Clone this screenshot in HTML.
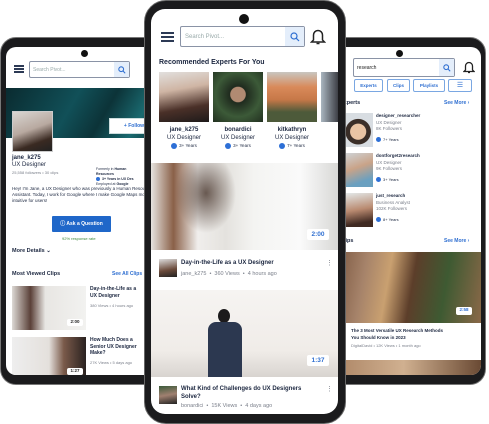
<!DOCTYPE html>
<html><head><meta charset="utf-8"><style>
*{margin:0;padding:0;box-sizing:border-box}
body{width:489px;height:424px;background:#fff;position:relative;overflow:hidden;font-family:"Liberation Sans",sans-serif;color:#1c2740}
.a{position:absolute}
.frame{position:absolute;background:#1b1b1d;border-radius:18px;border:1px solid #777}
.scr{position:absolute;background:#fff;overflow:hidden;border-radius:12px}
.b{font-weight:bold}
.g{color:#7a7f8a}
.blue{color:#2f6fd1}
.chk{display:inline-block;width:6px;height:6px;border-radius:50%;background:#2d6fd6;vertical-align:middle;margin-right:2px}
.ham{position:absolute;height:2px;background:#2c3a55}
.dur{position:absolute;background:#fff;color:#2f6fd1;font-weight:bold;border-radius:2px;text-align:center}
.sb{position:absolute;background:#e4eefb;display:flex;align-items:center;justify-content:center}
</style></head><body>

<!-- LEFT PHONE -->
<div class="frame" style="left:0;top:37px;width:170px;height:348px;border-radius:16px"></div>
<div class="scr" style="left:6px;top:47px;width:160px;height:328px;border-radius:10px 0 0 10px">
  <div class="a" style="left:75px;top:3px;width:7px;height:7px;border-radius:50%;background:#111"></div>
  <div class="ham" style="left:8px;top:18px;width:10px"></div>
  <div class="ham" style="left:8px;top:21px;width:10px"></div>
  <div class="ham" style="left:8px;top:24px;width:10px"></div>
  <div class="a" style="left:23px;top:14px;width:101px;height:17px;border:1px solid #8a93a6;border-radius:2px;font-size:5px;color:#9aa;padding:5px 3px">Search Pivot...</div>
  <div class="sb" style="left:108px;top:15px;width:15px;height:15px"><svg width="8" height="8" viewBox="0 0 10 10"><circle cx="4" cy="4" r="3" fill="none" stroke="#2f6fd1" stroke-width="1.3"/><path d="M6.3 6.3L9 9" stroke="#2f6fd1" stroke-width="1.3"/></svg></div>
  <!-- banner -->
  <div class="a" style="left:0;top:41px;width:160px;height:50px;background:linear-gradient(120deg,#0a2b30 0%,#115058 40%,#0c3338 60%,#1a6a70 80%,#0b2c30 100%)"></div>
  <div class="a" style="left:6px;top:64px;width:41px;height:41px;background:linear-gradient(160deg,#d9d6d2,#b8a9a0 45%,#3a2a22 75%,#222 100%);border:1px solid #ccc"></div>
  <div class="a" style="left:103px;top:71px;width:50px;height:16px;background:#fff;border:1px solid #cdd;color:#2f6fd1;font-size:5px;font-weight:bold;line-height:15px;text-align:center">+ Follow</div>
  <div class="a b" style="left:6px;top:108px;font-size:6px">jane_k275</div>
  <div class="a" style="left:6px;top:115px;font-size:6px">UX Designer</div>
  <div class="a g" style="left:6px;top:123px;font-size:4px">25,558 followers • 30 clips</div>
  <div class="a" style="left:90px;top:120px;font-size:3.5px;line-height:5px">Formerly in <b>Human<br>Resources</b><br><span class="chk" style="width:4px;height:4px"></span><b>3+ Years in UX Des</b><br>Employed at <b>Google</b></div>
  <div class="a" style="left:6px;top:139px;width:150px;font-size:4.5px;line-height:6px">Hey! I'm Jane, a UX Designer who was previously a Human Resources Assistant. Today, I work for Google where I make Google Maps more intuitive for users!</div>
  <div class="a" style="left:46px;top:169px;width:59px;height:16px;background:#1f67c9;color:#fff;font-size:5px;font-weight:bold;line-height:16px;text-align:center;border-radius:1px">ⓘ Ask a Question</div>
  <div class="a" style="left:56px;top:189px;font-size:4px;color:#3d8a3d">92% response rate</div>
  <div class="a b" style="left:6px;top:201px;font-size:5.5px">More Details ⌄</div>
  <div class="a b" style="left:6px;top:224px;font-size:5.5px">Most Viewed Clips</div>
  <div class="a b blue" style="left:106px;top:224px;font-size:5px">See All Clips</div>
  <div class="a" style="left:6px;top:239px;width:74px;height:44px;background:linear-gradient(90deg,#ddd9d4 0%,#5a4038 25%,#e8e6e3 45%,#f2f2f0 100%)"></div>
  <div class="dur" style="left:61px;top:272px;width:16px;height:7px;font-size:4.5px;color:#222">2:00</div>
  <div class="a b" style="left:84px;top:239px;font-size:5px;line-height:6.5px">Day-in-the-Life as a<br>UX Designer</div>
  <div class="a g" style="left:84px;top:256px;font-size:4px">380 Views • 4 hours ago</div>
  <div class="a" style="left:6px;top:290px;width:74px;height:42px;background:linear-gradient(90deg,#eee 0%,#e4e0dc 50%,#7a5a4a 70%,#2a2220 100%)"></div>
  <div class="dur" style="left:61px;top:321px;width:16px;height:7px;font-size:4.5px;color:#222">1:27</div>
  <div class="a b" style="left:84px;top:290px;font-size:5px;line-height:6.5px">How Much Does a<br>Senior UX Designer<br>Make?</div>
  <div class="a g" style="left:84px;top:313px;font-size:4px">27K Views • 5 days ago</div>
</div>

<!-- RIGHT PHONE -->
<div class="frame" style="left:320px;top:37px;width:166px;height:348px;border-radius:16px"></div>
<div class="scr" style="left:326px;top:47px;width:155px;height:328px;border-radius:0 10px 10px 0">
  <div class="a" style="left:70px;top:3px;width:7px;height:7px;border-radius:50%;background:#111"></div>
  <div class="a" style="left:27px;top:11px;width:102px;height:19px;border:1px solid #8a93a6;border-radius:2px;font-size:5px;color:#222;padding:6px 3px">research</div>
  <div class="sb" style="left:113px;top:12px;width:15px;height:17px"><svg width="8" height="8" viewBox="0 0 10 10"><circle cx="4" cy="4" r="3" fill="none" stroke="#2f6fd1" stroke-width="1.3"/><path d="M6.3 6.3L9 9" stroke="#2f6fd1" stroke-width="1.3"/></svg></div>
  <svg class="a" style="left:137px;top:13px" width="12" height="14" viewBox="0 0 12 14"><path d="M2.5 10V6a3.5 3.5 0 0 1 7 0v4l1.5 1.5H1z" fill="none" stroke="#222" stroke-width="1.3"/><path d="M5 12.5h2" stroke="#222" stroke-width="1.3"/></svg>
  <div class="a" style="left:28px;top:32px;width:29px;height:13px;border:1px solid #7aa7e2;border-radius:2px;font-size:4.5px;color:#2f6fd1;font-weight:bold;text-align:center;line-height:11px">Experts</div>
  <div class="a" style="left:61px;top:32px;width:23px;height:13px;border:1px solid #7aa7e2;border-radius:2px;font-size:4.5px;color:#2f6fd1;font-weight:bold;text-align:center;line-height:11px">Clips</div>
  <div class="a" style="left:87px;top:32px;width:32px;height:13px;border:1px solid #7aa7e2;border-radius:2px;font-size:4.5px;color:#2f6fd1;font-weight:bold;text-align:center;line-height:11px">Playlists</div>
  <div class="a" style="left:122px;top:32px;width:24px;height:13px;border:1px solid #7aa7e2;border-radius:2px;font-size:7px;color:#2f6fd1;text-align:center;line-height:11px">☰</div>
  <div class="a b" style="left:14px;top:53px;font-size:5.5px">Experts</div>
  <div class="a b blue" style="left:118px;top:53px;font-size:5px">See More ›</div>
  <div class="a" style="left:14px;top:66px;width:33px;height:34px;background:radial-gradient(circle at 55% 55%,#e9c4a4 0 30%,#3a2e28 32% 48%,#d8dde2 50%)"></div>
  <div class="a b" style="left:50px;top:66px;font-size:4.5px;line-height:6.7px">designer_researcher<br><span class="g" style="font-weight:normal">UX Designer<br>8K Followers</span></div>
  <div class="a" style="left:50px;top:90px;font-size:4px"><span class="chk" style="width:5px;height:5px"></span>7+ Years</div>
  <div class="a" style="left:14px;top:106px;width:33px;height:34px;background:linear-gradient(160deg,#cfd8de,#c9a388 45%,#6aa0c0 80%)"></div>
  <div class="a b" style="left:50px;top:106px;font-size:4.5px;line-height:6.7px">dontforget2research<br><span class="g" style="font-weight:normal">UX Designer<br>9K Followers</span></div>
  <div class="a" style="left:50px;top:130px;font-size:4px"><span class="chk" style="width:5px;height:5px"></span>3+ Years</div>
  <div class="a" style="left:14px;top:146px;width:33px;height:34px;background:linear-gradient(170deg,#e6eef0,#b98a70 50%,#402a22 85%)"></div>
  <div class="a b" style="left:50px;top:146px;font-size:4.5px;line-height:6.7px">just_research<br><span class="g" style="font-weight:normal">Business Analyst<br>102K Followers</span></div>
  <div class="a" style="left:50px;top:170px;font-size:4px"><span class="chk" style="width:5px;height:5px"></span>8+ Years</div>
  <div class="a b" style="left:14px;top:191px;font-size:5.5px">Clips</div>
  <div class="a b blue" style="left:118px;top:191px;font-size:5px">See More ›</div>
  <div class="a" style="left:0;top:205px;width:155px;height:71px;background:linear-gradient(100deg,#6e4a34 0%,#a6836a 25%,#c9a070 40%,#5c3e2a 55%,#3e5a32 75%,#8a6848 100%)"></div>
  <div class="dur" style="left:130px;top:260px;width:16px;height:8px;font-size:4.5px">2:58</div>
  <div class="a b" style="left:25px;top:281px;font-size:4.5px;line-height:6.5px">The 3 Most Versatile UX Research Methods<br>You Should Know in 2023</div>
  <div class="a g" style="left:25px;top:296px;font-size:4px">DigitalDavid • 12K Views • 1 month ago</div>
  <div class="a" style="left:0;top:313px;width:155px;height:20px;background:linear-gradient(90deg,#a88060,#d0b090,#6a4a34)"></div>
</div>

<!-- CENTER PHONE -->
<div class="frame" style="left:144px;top:0;width:202px;height:424px;border-radius:22px;z-index:5;border-color:#666"></div>
<div class="scr" style="left:151px;top:9px;width:187px;height:405px;z-index:6;border-radius:14px">
  <div class="a" style="left:88px;top:5px;width:10px;height:10px;border-radius:50%;background:#111"></div>
  <div class="ham" style="left:10px;top:23px;width:13px"></div>
  <div class="ham" style="left:10px;top:27px;width:13px"></div>
  <div class="ham" style="left:10px;top:31px;width:13px"></div>
  <div class="a" style="left:29px;top:17px;width:125px;height:21px;border:1px solid #8a93a6;border-radius:2px;font-size:6px;color:#9aa;padding:7px 4px">Search Pivot...</div>
  <div class="sb" style="left:134px;top:18px;width:19px;height:19px"><svg width="10" height="10" viewBox="0 0 10 10"><circle cx="4" cy="4" r="3" fill="none" stroke="#2f6fd1" stroke-width="1.2"/><path d="M6.3 6.3L9 9" stroke="#2f6fd1" stroke-width="1.2"/></svg></div>
  <svg class="a" style="left:159px;top:18px" width="16" height="18" viewBox="0 0 16 18"><path d="M3.5 13V8a4.5 4.5 0 0 1 9 0v5l2 2H1.5z" fill="none" stroke="#222" stroke-width="1.5"/><path d="M6.5 16.5h3" stroke="#222" stroke-width="1.5"/></svg>
  <div class="a b" style="left:8px;top:50px;font-size:7px">Recommended Experts For You</div>
  <div class="a" style="left:8px;top:63px;width:50px;height:50px;background:linear-gradient(170deg,#e2e0de 0%,#cfb5a4 35%,#4a3028 70%,#1e1a1a 100%)"></div>
  <div class="a" style="left:62px;top:63px;width:50px;height:50px;background:radial-gradient(circle at 50% 45%,#b08a72 0 20%,#1f2a1e 22%,#3c5a38 60%,#223020 100%)"></div>
  <div class="a" style="left:116px;top:63px;width:50px;height:50px;background:linear-gradient(180deg,#c8c6c0 0%,#d98a5a 30%,#c77848 55%,#4d5a3a 80%)"></div>
  <div class="a" style="left:170px;top:63px;width:20px;height:50px;background:linear-gradient(90deg,#aab6c0,#2a2a30)"></div>
  <div class="a" style="left:8px;top:117px;width:50px;text-align:center;font-size:6px;line-height:8px"><b>jane_k275</b><br>UX Designer<br><span style="font-size:4.5px"><span class="chk"></span>3+ Years</span></div>
  <div class="a" style="left:62px;top:117px;width:50px;text-align:center;font-size:6px;line-height:8px"><b>bonardici</b><br>UX Designer<br><span style="font-size:4.5px"><span class="chk"></span>3+ Years</span></div>
  <div class="a" style="left:116px;top:117px;width:50px;text-align:center;font-size:6px;line-height:8px"><b>kitkathryn</b><br>UX Designer<br><span style="font-size:4.5px"><span class="chk"></span>7+ Years</span></div>
  <div class="a" style="left:0;top:154px;width:187px;height:87px;background:linear-gradient(90deg,#e6e4e0 0%,#8a6048 12%,#f0eeec 25%,#e4e2de 40%,#f4f4f2 55%,#fafafa 80%,#d8d8d6 100%)"></div>
  <div class="a" style="left:0;top:154px;width:187px;height:87px;background:radial-gradient(ellipse 30px 40px at 55px 30px,rgba(60,40,30,.75),transparent)"></div>
  <div class="dur" style="left:156px;top:220px;width:22px;height:11px;font-size:6.5px;line-height:11px">2:00</div>
  <div class="a" style="left:8px;top:250px;width:18px;height:18px;background:linear-gradient(170deg,#ddd,#6a4a3a 60%,#222)"></div>
  <div class="a b" style="left:30px;top:251px;font-size:6px">Day-in-the-Life as a UX Designer</div>
  <div class="a g" style="left:30px;top:262px;font-size:5.5px">jane_k275 &nbsp;•&nbsp; 360 Views &nbsp;•&nbsp; 4 hours ago</div>
  <div class="a g" style="left:175px;top:250px;font-size:7px">⋮</div>
  <div class="a" style="left:0;top:281px;width:187px;height:87px;background:linear-gradient(180deg,#f6f4f2 0%,#f0ece8 70%,#d8d4d0 100%)"></div>
  <div class="a" style="left:67px;top:300px;width:12px;height:14px;border-radius:50%;background:#1c1a1c"></div>
  <div class="a" style="left:57px;top:313px;width:34px;height:55px;border-radius:8px 8px 0 0;background:#2c3850"></div>
  <div class="dur" style="left:156px;top:346px;width:22px;height:11px;font-size:6.5px;line-height:11px">1:37</div>
  <div class="a" style="left:8px;top:377px;width:18px;height:18px;background:linear-gradient(170deg,#3b5a3a,#a08070 50%,#222)"></div>
  <div class="a b" style="left:30px;top:376px;font-size:6px;line-height:8px">What Kind of Challenges do UX Designers<br>Solve?</div>
  <div class="a g" style="left:30px;top:394px;font-size:5.5px">bonardici &nbsp;•&nbsp; 15K Views &nbsp;•&nbsp; 4 days ago</div>
  <div class="a g" style="left:175px;top:376px;font-size:7px">⋮</div>
</div>
</body></html>
